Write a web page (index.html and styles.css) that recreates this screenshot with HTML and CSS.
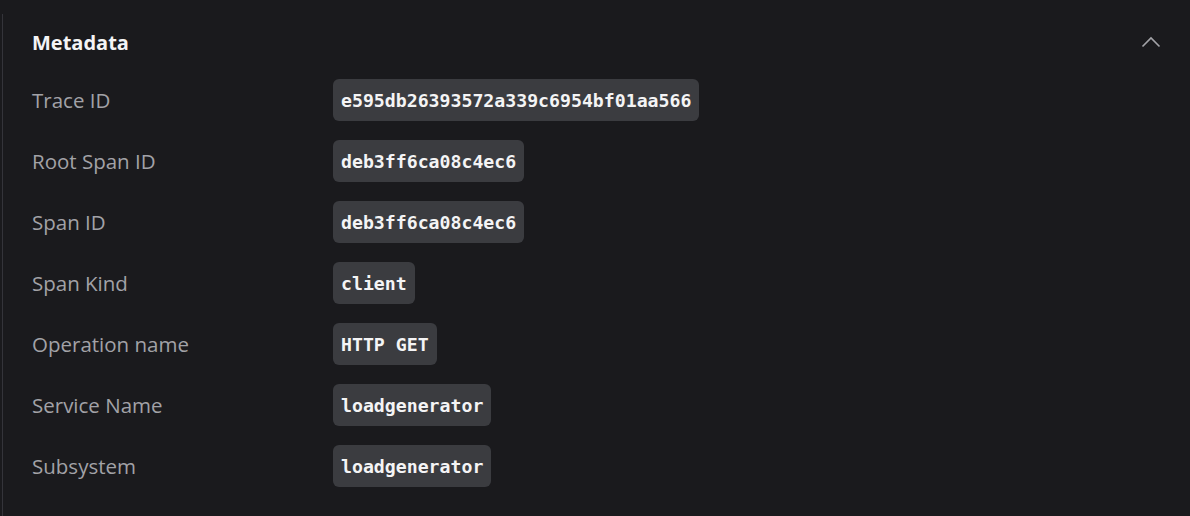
FILE: index.html
```html
<!DOCTYPE html>
<html>
<head>
<meta charset="utf-8">
<link rel="stylesheet" href="styles.css">
</head>
<body>
<div class="panel">
  <div class="header">
    <h2 class="title">Metadata</h2>
    <svg class="chevron" width="20" height="12" viewBox="0 0 20 12"><path d="M1.5 10.5 L10 2 L18.5 10.5" fill="none" stroke="#a3a3a8" stroke-width="1.6"/></svg>
  </div>
  <div class="grid">
    <div class="label">Trace ID</div><div class="val"><span class="chip">e595db26393572a339c6954bf01aa566</span></div>
    <div class="label">Root Span ID</div><div class="val"><span class="chip">deb3ff6ca08c4ec6</span></div>
    <div class="label">Span ID</div><div class="val"><span class="chip">deb3ff6ca08c4ec6</span></div>
    <div class="label">Span Kind</div><div class="val"><span class="chip">client</span></div>
    <div class="label">Operation name</div><div class="val"><span class="chip">HTTP GET</span></div>
    <div class="label">Service Name</div><div class="val"><span class="chip">loadgenerator</span></div>
    <div class="label">Subsystem</div><div class="val"><span class="chip">loadgenerator</span></div>
  </div>
</div>
</body>
</html>
```
FILE: styles.css
```css
html, body {
  margin: 0;
  padding: 0;
  background: #1a1a1d;
  height: 100%;
}
body {
  padding-left: 2px;
  font-family: "Open Sans", "Noto Sans", sans-serif;
}
.panel {
  border-left: 1px solid #34343a;
  min-height: 516px;
  box-sizing: border-box;
  padding: 0 29px;
}
.header {
  display: flex;
  align-items: center;
  justify-content: space-between;
  height: 58px;
  margin-top: 14px;
  margin-bottom: 7px;
}
.title {
  margin: 0;
  font-size: 20px;
  font-weight: 700;
  color: #f4f4f5;
  position: relative;
  top: -1px;
}
.chevron {
  position: relative;
  top: -1px;
}
.grid {
  display: grid;
  grid-template-columns: 301px 1fr;
  row-gap: 19px;
  align-items: center;
}
.label {
  font-size: 20.5px;
  font-weight: 500;
  color: #a2a2a7;
}
.val {
  display: flex;
}
.chip {
  background: #3b3c40;
  border-radius: 6px;
  height: 42px;
  display: flex;
  align-items: center;
  padding: 0 8px;
  font-family: "DejaVu Sans Mono", monospace;
  font-weight: 700;
  font-size: 18.2px;
  color: #f4f4f5;
}
```
